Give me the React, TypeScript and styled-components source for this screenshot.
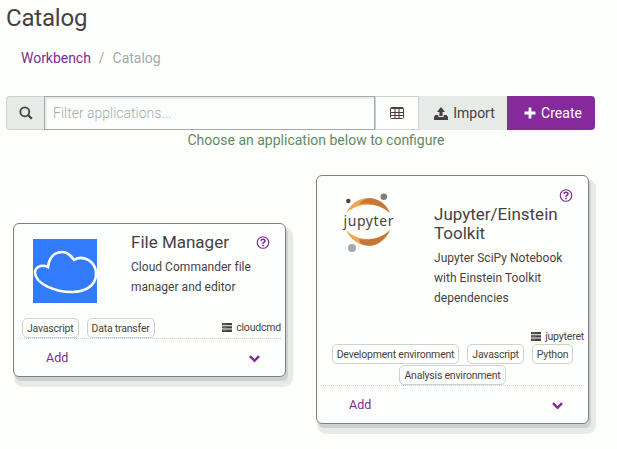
import React from "react";
import styled, { createGlobalStyle } from "styled-components";

const Global = createGlobalStyle`
  * { box-sizing: border-box; }
  body {
    margin: 0;
    background: #fdfffc;
    color: #483f42;
    font-family: Roboto, "Liberation Sans", sans-serif;
    overflow: hidden;
  }
`;

const Page = styled.main`
  width: 617px;
  height: 449px;
  padding: 3px 0 0 6px;
`;
const Title = styled.h1`
  margin: 0;
  font-size: 24px;
  line-height: 30px;
  font-weight: 400;
  letter-spacing: -0.2px;
`;
const Breadcrumb = styled.nav`
  display: flex;
  gap: 8px;
  margin-top: 15px;
  padding-left: 15px;
  height: 20px;
  font-size: 14px;
  line-height: 20px;
  letter-spacing: -0.03px;
  color: #a4aaac;
`;
const Link = styled.a`
  color: #7d2a96;
`;
const Toolbar = styled.div`
  display: flex;
  width: 589px;
  height: 34px;
  margin-top: 28px;
`;
const Addon = styled.span`
  width: 38px;
  display: flex;
  align-items: center;
  justify-content: center;
  background: #e7ebe8;
  border: 1px solid #ccd1d3;
  border-right: 0;
  border-radius: 4px 0 0 4px;
`;
const Filter = styled.input`
  width: 331px;
  min-width: 0;
  border: 1px solid #a4aaac;
  border-radius: 0;
  box-shadow: inset 2px 2px 0 #e7ebe8;
  background: #fdfffc;
  padding: 0 8px;
  font: 300 14px Roboto, sans-serif;
  outline: none;
  &::placeholder { color: #a4aaac; opacity: 1; }
`;
const Button = styled.button<{ $kind: "plain" | "soft" | "primary" }>`
  width: ${(p) => (p.$kind === "plain" ? 44 : 88)}px;
  display: flex;
  align-items: center;
  justify-content: center;
  gap: 5px;
  padding: 0 0 0 ${(p) => ({ plain: 0, soft: 3, primary: 4 })[p.$kind]}px;
  font: 400 14px Roboto, sans-serif;
  color: ${(p) => (p.$kind === "primary" ? "#fdfffc" : "#483f42")};
  background: ${(p) => ({ plain: "#fdfffc", soft: "#e7ebe8", primary: "#862a9b" })[p.$kind]};
  border: ${(p) => (p.$kind === "plain" ? "1px solid #ccd1d3" : "0")};
  border-radius: ${(p) => (p.$kind === "primary" ? "0 4px 4px 0" : "0")};
`;
const Hint = styled.p`
  width: 620px;
  margin: 0;
  text-align: center;
  font-size: 14px;
  line-height: 20px;
  color: #648a5e;
`;
const Cards = styled.section`
  display: flex;
  align-items: center;
  gap: 30px;
  height: 249px;
  margin-top: 25px;
  padding-left: 7px;
`;
const Card = styled.article<{ $height: number }>`
  display: flex;
  flex-direction: column;
  width: 273px;
  height: ${(p) => p.$height}px;
  padding: 0 4px;
  background: #fdfffc;
  border: 1px solid #867c7b;
  border-radius: 6px;
  box-shadow: 2px 4px 0 0 #ccd1d4, 4px 7px 0 3px #e7ebe8;
`;
const Body = styled.div<{ $top: number }>`
  display: grid;
  grid-template-columns: 98px 125px 1fr;
  padding: ${(p) => p.$top}px 0 0 15px;
  flex: 1;
`;
const Art = styled.div<{ $top: number }>`
  padding-top: ${(p) => p.$top}px;
  svg { display: block; }
`;
const Copy = styled.div<{ $top: number }>`
  padding-top: ${(p) => p.$top}px;
  white-space: nowrap;
`;
const Name = styled.h2`
  margin: 0;
  font-size: 17px;
  line-height: 19px;
  font-weight: 400;
`;
const Description = styled.p`
  margin: 5px 0 0;
  font-size: 12px;
  line-height: 20px;
  letter-spacing: 0.03px;
`;
const Help = styled.span<{ $top: number }>`
  padding-top: ${(p) => p.$top}px;
  svg { display: block; }
`;
const Meta = styled.div<{ $stack?: boolean }>`
  display: flex;
  flex-direction: ${(p) => (p.$stack ? "column-reverse" : "row")};
  justify-content: space-between;
  font-size: 10.5px;
  letter-spacing: -0.2px;
`;
const Tags = styled.div<{ $center?: boolean }>`
  display: flex;
  flex-wrap: wrap;
  justify-content: ${(p) => (p.$center ? "center" : "flex-start")};
  padding-left: ${(p) => (p.$center ? 0 : 4)}px;
  gap: 1px 8px;
`;
const Tag = styled.span`
  height: 20px;
  padding: 0 4px;
  border: 1px solid #ccd1d4;
  border-radius: 5px;
  line-height: 20px;
  white-space: nowrap;
`;
const Key = styled.span<{ $height: number }>`
  display: flex;
  align-items: center;
  align-self: flex-start;
  margin-left: auto;
  gap: 4px;
  height: ${(p) => p.$height}px;
`;
const Footer = styled.footer`
  display: flex;
  align-items: center;
  justify-content: space-between;
  height: 38px;
  padding: 0 21px 0 28px;
  border-top: 1px dotted #ccd1d4;
  font-size: 12.5px;
  color: #7d2a96;
  svg { margin-top: 3px; }
`;

const SearchIcon = () => (
  <svg width="14" height="14" viewBox="0 0 14 14" fill="none" stroke="#483f42">
    <circle cx="5.8" cy="5.8" r="4.5" strokeWidth="1.8" />
    <path d="M9.2 9.2 12.8 12.8" strokeWidth="2.3" />
  </svg>
);
const TableIcon = () => (
  <svg width="14" height="12" viewBox="0 0 14 12" fill="none" stroke="#543c3c">
    <rect x=".5" y=".5" width="13" height="11" rx="1" />
    <path d="M1 1.5h12M1 5.5h12M1 8.5h12M5 2v9M9 2v9" strokeWidth="1.1" />
  </svg>
);
const UploadIcon = () => (
  <svg width="14" height="13" viewBox="0 0 14 13" fill="#483f42">
    <path d="M7 0 11 5H8.6v4H5.4V5H3ZM1.5 8h2.8v2h5.4V8h2.8L14 10v3H0v-3Z" />
  </svg>
);
const PlusIcon = () => (
  <svg width="12" height="12" viewBox="0 0 12 12" fill="#fdfffc">
    <path d="M4.6.5h2.8v4.1h4.1v2.8H7.4v4.1H4.6V7.4H.5V4.6h4.1Z" />
  </svg>
);
const HelpIcon = () => (
  <svg width="14" height="13" viewBox="0 0 12 12" fill="none" stroke="#7d2a96">
    <circle cx="6" cy="6" r="5.3" strokeWidth="1.1" />
    <path d="M4.1 4.5C4.4 2.4 7.8 2.6 7.8 4.5 7.8 5.7 6 5.6 6 7.1M6 8v1.5" strokeWidth="1.5" />
  </svg>
);
const ServerIcon = () => (
  <svg width="10" height="9" viewBox="0 0 11 9" preserveAspectRatio="none">
    <path d="M0 0h11v2.3H0ZM0 3.3h11v2.3H0ZM0 6.6h11v2.3H0Z" fill="#483f42" />
    <path d="M1 1.1h4M1 4.4h4M1 7.7h4" stroke="#867c7b" strokeWidth=".7" />
  </svg>
);
const ChevronIcon = () => (
  <svg width="11" height="8" viewBox="0 0 11 8" fill="none" stroke="#862a9b" strokeWidth="2.5">
    <path d="M1 1.2 5.5 5.8 10 1.2" />
  </svg>
);
const CloudLogo = () => (
  <svg width="64" height="64" viewBox="0 0 64 64">
    <path fill="#327bfa" d="M0 0h64v64H0z" />
    <path
      d="M15 28C16 19 21 13 29 13 36 13 39 18 41 21 49 16 63 21 63 35 63 46 53 53 39 53 22 53 3 45 2 34 2 28 8 25 15 28Z"
      fill="none" stroke="#fdfffc" strokeWidth="2.6"
    />
  </svg>
);
const JupyterLogo = () => (
  <svg width="64" height="64" viewBox="0 0 64 64">
    <path d="M10 21C20 1 45 1 54 21 42 10 22 10 10 21Z" fill="#f0a551" />
    <path d="M23 12C26 8 30 6 35 6.2 43 7 50 12 54 21 46 14 35 10 23 12Z" fill="#c5763b" />
    <path d="M10 38C20 59 45 59 54 38 42 50 22 50 10 38Z" fill="#f0a551" />
    <path d="M23 47C35 49 46 46 54 38 47 53 34 57 24 51Z" fill="#c5763b" />
    <circle cx="12.3" cy="9" r="2.2" fill="#483f42" />
    <circle cx="47.8" cy="4.7" r="3.3" fill="#867c7b" />
    <circle cx="16" cy="56" r="4" fill="#a4aaac" />
    <text x="7.5" y="34" textLength="50" fontFamily="Noto Sans, sans-serif" fontSize="14" fill="#483f42">jupyter</text>
  </svg>
);

type App = {
  name: string[];
  description: string[];
  tags: string[];
  id: string;
  tall?: boolean;
};
const apps: App[] = [
  {
    name: ["File Manager"],
    description: ["Cloud Commander file", "manager and editor"],
    tags: ["Javascript", "Data transfer"],
    id: "cloudcmd",
  },
  {
    name: ["Jupyter/Einstein", "Toolkit"],
    description: ["Jupyter SciPy Notebook", "with Einstein Toolkit", "dependencies"],
    tags: ["Development environment", "Javascript", "Python", "Analysis environment"],
    id: "jupyteret",
    tall: true,
  },
];
const Lines = ({ items }: { items: string[] }) => (
  <>{items.map((t) => <React.Fragment key={t}>{t}<br /></React.Fragment>)}</>
);

const AppCard = ({ app }: { app: App }) => (
  <Card $height={app.tall ? 249 : 154}>
    <Body $top={app.tall ? 13 : 9}>
      <Art $top={app.tall ? 3 : 6}>{app.tall ? <JupyterLogo /> : <CloudLogo />}</Art>
      <Copy $top={app.tall ? 16 : 0}>
        <Name><Lines items={app.name} /></Name>
        <Description><Lines items={app.description} /></Description>
      </Copy>
      <Help $top={app.tall ? 0 : 3}><HelpIcon /></Help>
    </Body>
    <Meta $stack={app.tall}>
      <Tags $center={app.tall}>{app.tags.map((t) => <Tag key={t}>{t}</Tag>)}</Tags>
      <Key $height={app.tall ? 16 : 19}><ServerIcon />{app.id}</Key>
    </Meta>
    <Footer><span>Add</span><ChevronIcon /></Footer>
  </Card>
);

export default function App() {
  return (
    <>
      <Global />
      <Page>
        <Title>Catalog</Title>
        <Breadcrumb><Link>Workbench</Link><span>/</span><span>Catalog</span></Breadcrumb>
        <Toolbar>
          <Addon><SearchIcon /></Addon>
          <Filter placeholder="Filter applications..." />
          <Button $kind="plain"><TableIcon /></Button>
          <Button $kind="soft"><UploadIcon />Import</Button>
          <Button $kind="primary"><PlusIcon />Create</Button>
        </Toolbar>
        <Hint>Choose an application below to configure</Hint>
        <Cards>{apps.map((a) => <AppCard key={a.id} app={a} />)}</Cards>
      </Page>
    </>
  );
}
